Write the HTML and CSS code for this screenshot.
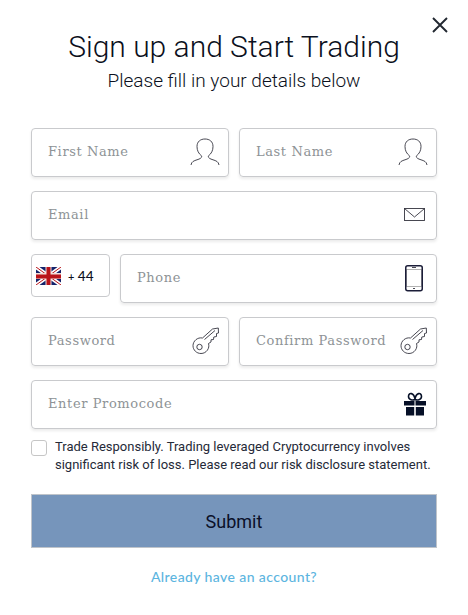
FILE: index.html
```html
<!DOCTYPE html>
<html lang="en">

<head>
    <meta charset="UTF-8">
    <meta name="viewport" content="width=device-width, initial-scale=1.0">
    <title>Sign up</title>
    <link rel="stylesheet" href="styles.css">
</head>

<body>
    <!-- Icons used more than once -->
    <svg class="sprite">
        <symbol id="icon-user" viewBox="0 0 30 28">
            <path d="M1 27C1.5 23.5 4 22.8 7 21.8C10 20.8 11.5 20.2 11.8 18.2C8.5 15.5 7 12.5 7 8.5C7 3.5 10.5 1 15 1S23 3.5 23 8.5C23 12.5 21.500 15.500 18.200 18.200C18.500 20.200 20 20.800 23 21.800C26 22.800 28.500 23.500 29 27"/>
        </symbol>
        <symbol id="icon-key" viewBox="0 0 28 28">
            <path d="M10.500 11L20.500 2L26.300 1L26.500 6L24.500 6.500L24.500 9.500L21.800 10L21.500 12.500L19 12.800L19 15L16.500 16.500C18 21 14.500 26.500 9 26.500C4.500 26.500 1 23 1 18.700C1 14 5.500 10 10.500 11Z"/>
            <path d="M12.500 12.500L23 3.500"/>
            <circle cx="7.500" cy="20" r="2.700"/>
        </symbol>
    </svg>

    <div class="signup">
        <button type="button" class="close" aria-label="Close">
            <svg viewBox="0 0 16 16"><path d="M1 1L15 15M15 1L1 15"/></svg>
        </button>
        <h1>Sign up and Start Trading</h1>
        <p class="subtitle">Please fill in your details below</p>

        <form id="signupForm">
            <div class="row">
                <div class="field">
                    <input type="text" name="firstName" placeholder="First Name">
                    <svg class="icon user"><use href="#icon-user"/></svg>
                </div>
                <div class="field">
                    <input type="text" name="lastName" placeholder="Last Name">
                    <svg class="icon user"><use href="#icon-user"/></svg>
                </div>
            </div>
            <div class="row">
                <div class="field">
                    <input type="email" name="email" placeholder="Email">
                    <svg class="icon mail" viewBox="0 0 21 14">
                        <rect x="0.5" y="0.5" width="20" height="12"/>
                        <path d="M0.500 0.500L10.500 9L20.500 0.500"/>
                    </svg>
                </div>
            </div>
            <div class="row">
                <div class="prefix">
                    <svg class="flag" viewBox="0 0 25 18">
                        <rect width="25" height="18" fill="#14236b"/>
                        <path d="M0 0L25 18M25 0L0 18" stroke="#fff" stroke-width="4"/>
                        <path d="M0 0L25 18M25 0L0 18" stroke="#b91319" stroke-width="1"/>
                        <path d="M12.500 0V18M0 9H25" stroke="#f0dcd8" stroke-width="6"/>
                        <path d="M12.500 0V18M0 9.500H25" stroke="#b91319" stroke-width="4"/>
                    </svg>
                    <span><small>+</small> 44</span>
                </div>
                <div class="field">
                    <input type="tel" name="phone" placeholder="Phone">
                    <svg class="icon phone" viewBox="0 0 18 27">
                        <rect class="screen" x="1.500" y="4.500" width="15" height="17"/>
                        <rect class="case" x="0.750" y="0.750" width="16.500" height="25" rx="2"/>
                        <path d="M7 2.500H11M8 23.500H10"/>
                    </svg>
                </div>
            </div>
            <div class="row">
                <div class="field">
                    <input type="password" name="password" placeholder="Password">
                    <svg class="icon key"><use href="#icon-key"/></svg>
                </div>
                <div class="field">
                    <input type="password" name="confirmPassword" placeholder="Confirm Password">
                    <svg class="icon key"><use href="#icon-key"/></svg>
                </div>
            </div>
            <div class="row">
                <div class="field">
                    <input type="text" name="promocode" placeholder="Enter Promocode">
                    <svg class="icon gift" viewBox="0 0 22 24">
                        <path class="box" d="M0 9H10.500V13.500H0ZM11.500 9H22V13.500H11.500ZM2 15H10.200V23.500H2ZM11.800 15H20V23.500H11.800Z"/>
                        <path class="bow" d="M11 7.500C9 8.500 4.500 8 4.500 4.500C4.500 0 10 0.500 11 7C12 0.500 17.500 0 17.500 4.500C17.500 8 13 8.500 11 7.500Z"/>
                    </svg>
                </div>
            </div>

            <label class="risk">
                <input type="checkbox" name="risk">
                <span>Trade Responsibly. Trading leveraged Cryptocurrency involves<br>significant risk of loss. Please read our risk disclosure statement.</span>
            </label>

            <button type="submit" class="submit">Submit</button>
        </form>
        <a class="login" href="#">Already have an account?</a>
    </div>
</body>

</html>
```
FILE: styles.css
```css
* {
    box-sizing: border-box;
}

body {
    margin: 0;
    background-color: #fff;
    color: #0b1020;
    font-family: Roboto, sans-serif;
}

.sprite {
    display: none;
}

.signup {
    position: relative;
    padding: 28px 31px 0;
    text-align: center;
}

.close {
    position: absolute;
    top: 17px;
    right: 20px;
    width: 16px;
    height: 16px;
    padding: 0;
    border: none;
    background: none;
    cursor: pointer;
}

.close svg {
    display: block;
    fill: none;
    stroke: #222831;
    stroke-width: 1.9;
}

h1 {
    margin: 0;
    font-size: 30px;
    font-weight: 300;
    line-height: 38px;
    white-space: nowrap;
}

.subtitle {
    margin: 3px 0 0;
    font-size: 19px;
    font-weight: 300;
    line-height: 24px;
}

form {
    margin-top: 35px;
}

.row {
    display: flex;
    align-items: flex-start;
    gap: 10px;
    margin-bottom: 14px;
}

.field {
    display: flex;
    flex: 1;
    align-items: center;
    min-width: 0;
    height: 49px;
    padding-left: 16px;
    border: 1px solid #c9cacd;
    border-radius: 4px;
    box-shadow: 0 2px 3px rgba(0, 0, 0, 0.08);
}

.field input {
    flex: 1;
    min-width: 0;
    height: 44px;
    padding: 0 0 2px;
    border: none;
    outline: none;
    background: none;
    font-family: "DejaVu Serif", serif;
    font-size: 13px;
    letter-spacing: 0.6px;
}

.field input::placeholder {
    color: #8e9396;
    opacity: 1;
}

.icon {
    flex: none;
    fill: none;
    stroke: #34343f;
    stroke-width: 0.9;
}

.user {
    width: 30px;
    height: 28px;
    margin: -2px 8px 0 0;
}

.mail {
    width: 21px;
    height: 14px;
    margin: -1px 11px 0 0;
}

.phone {
    width: 18px;
    height: 27px;
    margin-right: 13px;
}

.phone .case {
    stroke: #1b1d38;
    stroke-width: 1.5;
}

.phone .screen {
    stroke: #aaa;
}

.key {
    width: 28px;
    height: 28px;
    margin: -2px 8px 0 0;
}

.gift {
    width: 22px;
    height: 24px;
    margin: -1px 10px 0 0;
}

.gift .box {
    fill: #061027;
    stroke: none;
}

.gift .bow {
    stroke: #061027;
    stroke-width: 1.6;
}

.prefix {
    display: flex;
    align-items: center;
    gap: 7px;
    width: 79px;
    height: 43px;
    padding-left: 4px;
    border: 1px solid #c9cacd;
    border-radius: 4px;
    font-family: Lato, sans-serif;
    font-size: 13.5px;
    font-weight: 500;
    white-space: nowrap;
}

.prefix small {
    font-size: 11px;
}

.flag {
    width: 25px;
    height: 18px;
}

.risk {
    display: flex;
    gap: 8px;
    margin-top: -5px;
    color: #252a38;
    font-size: 13px;
    line-height: 18px;
    text-align: left;
    white-space: nowrap;
}

.risk input {
    appearance: none;
    flex: none;
    width: 16px;
    height: 16px;
    margin: 2px 0 0;
    border: 1px solid #c6c6c6;
    border-radius: 3px;
    background-color: #fff;
}

.submit {
    display: block;
    width: 100%;
    height: 54px;
    margin-top: 20px;
    padding: 0;
    border: 1px solid #bfc4ca;
    background-color: #7695bb;
    color: #0b1028;
    font-family: Roboto, sans-serif;
    font-size: 18px;
    cursor: pointer;
}

.login {
    display: block;
    margin-top: 19px;
    color: #5cb5e0;
    font-family: Lato, sans-serif;
    font-size: 14px;
    font-weight: 500;
    letter-spacing: 0.4px;
    line-height: 20px;
    text-decoration: none;
}
```
